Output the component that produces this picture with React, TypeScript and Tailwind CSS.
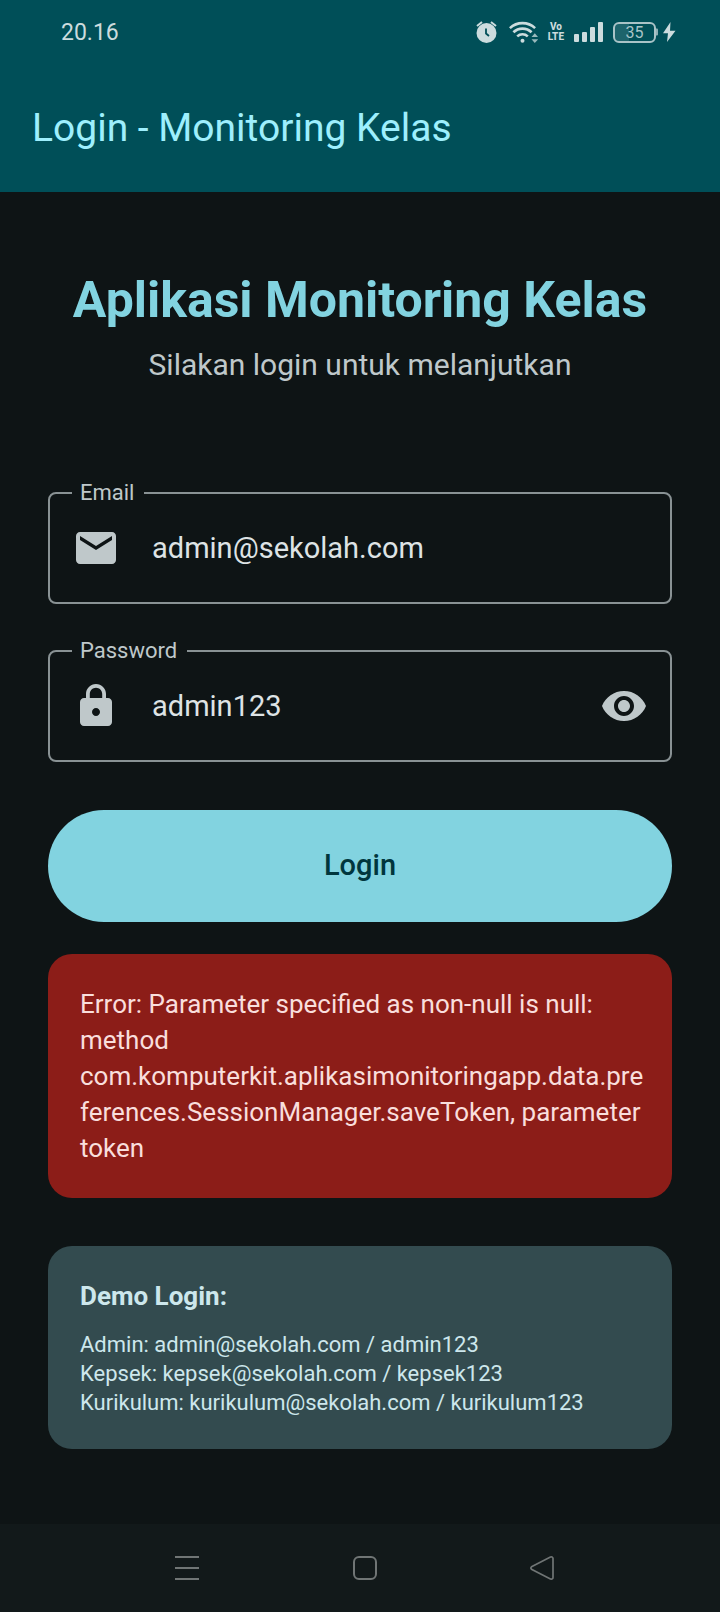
import { useState } from "react";
import type { ReactNode } from "react";

const demoAccounts = [
  "Admin: admin@sekolah.com / admin123",
  "Kepsek: kepsek@sekolah.com / kepsek123",
  "Kurikulum: kurikulum@sekolah.com / kurikulum123",
];

function StatusBar() {
  return (
    <div className="flex h-16 items-center justify-between pr-11 pl-[61px] text-[#ccdcde]">
      <time className="pt-0.5 text-[23px]">20.16</time>
      <div className="flex items-center">
        <svg className="h-[22px] w-[21px]" viewBox="0 0 21 22" fill="none" aria-label="Alarm">
          <path d="M1 5 6 1M15 1l5 4" stroke="currentColor" strokeWidth="2" />
          <circle cx="10.5" cy="12" r="10" fill="currentColor" />
          <path d="M10 7.500v5l3 2.500" stroke="#004f58" strokeWidth="1.800" />
        </svg>
        <svg className="ml-3 h-6 w-[29px]" viewBox="0 0 29 24" fill="none" aria-label="Wi-Fi">
          <g stroke="currentColor" strokeWidth="2.600">
            <path d="M.9 8.100a18.500 18.500 0 0 1 25.200 0" />
            <path d="M4.400 12.300a13 13 0 0 1 18.200 0" />
            <path d="M8.200 16.400a7.800 7.800 0 0 1 10.600 0" />
          </g>
          <circle cx="13.5" cy="20.7" r="2" fill="currentColor" />
          <path d="M21.500 17h8L25.500 12z" fill="#004f58" stroke="#004f58" strokeWidth="2" />
          <path d="m22.500 17 3.300-3.800 3.300 3.800zM22.500 19.300l3.300 3.800 3.300-3.800z" fill="currentColor" opacity=".75" />
        </svg>
        <div className="ml-2.5 flex flex-col text-center text-[10px] leading-[10px] font-extrabold">
          <span>Vo</span>
          <span>LTE</span>
        </div>
        <svg className="ml-2.5 h-5 w-[29px]" viewBox="0 0 29 20" fill="currentColor" aria-label="Signal">
          <rect x="0" y="12" width="5" height="8" rx="1" />
          <rect x="8" y="10" width="5" height="10" rx="1" />
          <rect x="16" y="5" width="5" height="15" rx="1" />
          <rect x="24" y="0" width="5" height="20" rx="1" />
        </svg>
        <div className="ml-2.5 flex h-[21px] w-[43px] items-center justify-center rounded-md border-2 border-[#a9c3c7] bg-linear-to-r from-[#1d646c] from-35% to-[#004f58] to-35% pt-0.5 text-base leading-none text-[#a9c3c7]">
          35
        </div>
        <svg className="h-5 w-5" viewBox="0 0 20 20" fill="currentColor" aria-label="Charging">
          <path d="M0 6.500h1q1 0 1 1v5q0 1-1 1H0z" opacity=".7" />
          <path d="M14.500 0 7 11.200h5L11 20 19.500 8.700H14z" />
        </svg>
      </div>
    </div>
  );
}

type FieldProps = {
  id: string;
  label: string;
  type: string;
  initial: string;
  icon: ReactNode;
  trailing?: ReactNode;
};

function Field({ id, label, type, initial, icon, trailing }: FieldProps) {
  const [value, setValue] = useState(initial);
  return (
    <fieldset className="min-w-0 rounded-lg border-2 border-[#899294] px-[22px]">
      <legend className="pr-2.5 pl-2 text-[22px] leading-6 text-[#bfc8ca]">
        <label htmlFor={id}>{label}</label>
      </legend>
      <div className="flex h-[97px] items-center pb-[11px] text-[#bfc8ca]">
        {icon}
        <input
          id={id}
          type={type}
          value={value}
          onChange={(e) => setValue(e.target.value)}
          className="ml-8 min-w-0 flex-1 bg-transparent text-[29px] leading-10 text-[#dee3e5] outline-none"
        />
        {trailing}
      </div>
    </fieldset>
  );
}

function MailIcon() {
  return (
    <svg className="size-12 shrink-0" viewBox="0 0 24 24" fill="currentColor" aria-hidden="true">
      <path d="M20 4H4c-1.100 0-1.990.9-1.990 2L2 18c0 1.100.9 2 2 2h16c1.100 0 2-.9 2-2V6c0-1.100-.9-2-2-2zm0 4-8 5-8-5V6l8 5 8-5v2z" />
    </svg>
  );
}

function LockIcon() {
  return (
    <svg className="size-12 shrink-0" viewBox="0 0 24 24" fill="currentColor" aria-hidden="true">
      <path d="M18 8h-1V6c0-2.760-2.240-5-5-5S7 3.240 7 6v2H6c-1.100 0-2 .9-2 2v10c0 1.100.9 2 2 2h12c1.100 0 2-.9 2-2V10c0-1.100-.9-2-2-2zm-6 9c-1.100 0-2-.9-2-2s.9-2 2-2 2 .9 2 2-.9 2-2 2zm3.100-9H8.900V6c0-1.710 1.390-3.100 3.100-3.100s3.100 1.390 3.100 3.100v2z" />
    </svg>
  );
}

function EyeIcon() {
  return (
    <svg className="size-12" viewBox="0 0 24 24" fill="currentColor" aria-hidden="true">
      <path d="M12 4.500C7 4.500 2.730 7.610 1 12c1.730 4.390 6 7.500 11 7.500s9.270-3.110 11-7.500c-1.730-4.390-6-7.500-11-7.500zM12 17c-2.760 0-5-2.240-5-5s2.240-5 5-5 5 2.240 5 5-2.240 5-5 5zm0-8c-1.660 0-3 1.340-3 3s1.340 3 3 3 3-1.340 3-3-1.340-3-3-3z" />
    </svg>
  );
}

function NavigationBar() {
  return (
    <nav className="grid h-[88px] grid-cols-[1fr_auto_1fr] items-center bg-[#12191a] pl-2.5 text-[#707575]">
      <button type="button" aria-label="Recent apps" className="mr-[154px] justify-self-end">
        <svg className="size-6" viewBox="0 0 24 24" fill="currentColor">
          <path d="M0 0h24v2H0zM0 11h24v2H0zM0 22h24v2H0z" />
        </svg>
      </button>
      <button type="button" aria-label="Home">
        <svg className="size-6" viewBox="0 0 24 24" fill="none" stroke="currentColor" strokeWidth="2">
          <rect x="1" y="1" width="22" height="22" rx="5" />
        </svg>
      </button>
      <button type="button" aria-label="Back" className="ml-[153px] justify-self-start">
        <svg className="size-6" viewBox="0 0 24 24" fill="none" stroke="currentColor" strokeWidth="1.700">
          <path d="M1.500 10.800 20.400 1q2.600-.6 2.600 1.600v18.800q0 2.200-2.600 1.600L1.500 13.200Q.2 12 1.500 10.800z" />
        </svg>
      </button>
    </nav>
  );
}

export default function App() {
  const [visible, setVisible] = useState(true);
  return (
    <div className="flex min-h-screen flex-col bg-[#0e1415] font-['Roboto',sans-serif]">
      <header className="bg-[#004f58]">
        <StatusBar />
        <div className="flex h-32 items-center px-8">
          <p className="text-[39px] leading-[50px] text-[#9eeffd]">Login - Monitoring Kelas</p>
        </div>
      </header>

      <main className="flex flex-1 flex-col px-12 pt-[76px] pb-[75px]">
        <h1 className="text-center text-[50px] leading-[64px] font-bold text-[#82d3e0]">Aplikasi Monitoring Kelas</h1>
        <p className="mt-[11px] text-center text-[30px] leading-[44px] text-[#bfc8ca]">Silakan login untuk melanjutkan</p>

        <form className="mt-[94px] flex flex-col" onSubmit={(e) => e.preventDefault()}>
          <div className="flex flex-col gap-[35px]">
            <Field id="email" label="Email" type="text" initial="admin@sekolah.com" icon={<MailIcon />} />
            <Field
              id="password"
              label="Password"
              type={visible ? "text" : "password"}
              initial="admin123"
              icon={<LockIcon />}
              trailing={
                <button type="button" aria-label="Toggle password visibility" onClick={() => setVisible(!visible)}>
                  <EyeIcon />
                </button>
              }
            />
          </div>
          <button type="submit" className="mt-12 h-28 rounded-full bg-[#82d3e0] text-[29px] font-medium text-[#00363d]">
            Login
          </button>
        </form>

        <p role="alert" className="mt-8 rounded-3xl bg-[#8c1d18] py-8 pr-6 pl-8 text-[26px] leading-9 wrap-break-word text-[#f9dedc]">
          Error: Parameter specified as non-null is null: method
          com.komputerkit.aplikasimonitoringapp.data.preferences.SessionManager.saveToken, parameter token
        </p>

        <section className="mt-12 rounded-3xl bg-[#334b4f] p-8 text-[#cde7ec]">
          <h2 className="text-[26px] leading-9 font-bold">Demo Login:</h2>
          <ul className="mt-4 text-[22px] leading-[29px]">
            {demoAccounts.map((account) => (
              <li key={account}>{account}</li>
            ))}
          </ul>
        </section>
      </main>

      <NavigationBar />
    </div>
  );
}
